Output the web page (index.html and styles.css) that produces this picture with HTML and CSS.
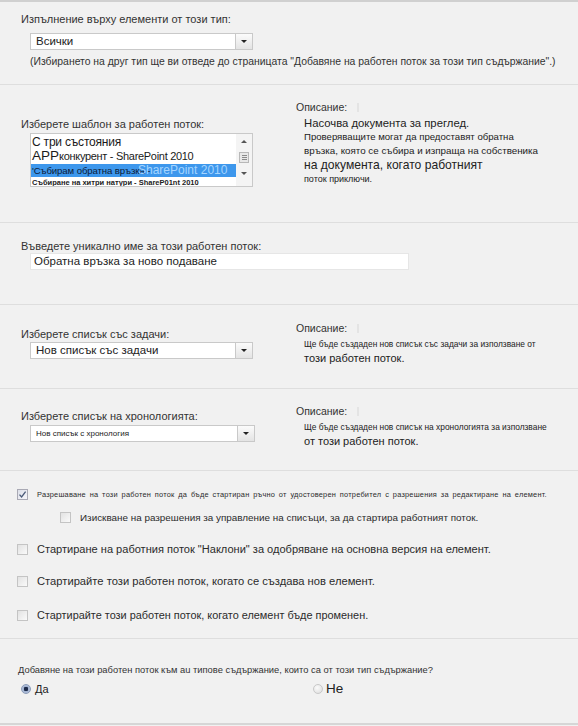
FILE: index.html
```html
<!DOCTYPE html>
<html lang="bg">
<head>
<meta charset="utf-8">
<title>Добавяне на работен поток</title>
<link rel="stylesheet" href="styles.css">
</head>
<body>
<div class="page">
  <section class="sec s1">
    <div class="lbl">Изпълнение върху елементи от този тип:</div>
    <div class="select sel-type"><span class="val v-big">Всички</span><span class="drop"><span class="tri"></span></span></div>
    <div class="hint">(Избирането на друг тип ще ви отведе до страницата "Добавяне на работен поток за този тип съдържание".)</div>
  </section>

  <section class="sec two s2">
    <div class="left l2">
      <div class="lbl">Изберете шаблон за работен поток:</div>
      <div class="listbox">
        <div class="opts">
          <div class="opt o1">С три състояния</div>
          <div class="opt o2"><span class="big">АРР</span>конкурент - SharePoint 2010</div>
          <div class="opt osel"><span class="dark">'Събирам обратна връзка -</span><span class="ghost">SharePoint 2010</span></div>
          <div class="opt o4">Събиране на хитри натури - ShareP01nt 2010</div>
        </div>
        <div class="sbar">
          <span class="sb-up"></span>
          <span class="sb-thumb"><i></i><i></i><i></i></span>
          <span class="sb-down"></span>
        </div>
      </div>
    </div>
    <div class="right r2">
      <div class="dlbl">Описание:<span class="mark"></span></div>
      <div class="desc">
        <div class="d d11">Насочва документа за преглед.</div>
        <div class="d d95">Проверяващите могат да предоставят обратна</div>
        <div class="d d98">връзка, която се събира и изпраща на собственика</div>
        <div class="d d12">на документа, когато работният</div>
        <div class="d d9">поток приключи.</div>
      </div>
    </div>
  </section>

  <section class="sec s3">
    <div class="lbl">Въведете уникално име за този работен поток:</div>
    <div class="input">Обратна връзка за ново подаване</div>
  </section>

  <section class="sec two s4">
    <div class="left l4">
      <div class="lbl">Изберете списък със задачи:</div>
      <div class="select sel-task"><span class="val v-big">Нов списък със задачи</span><span class="drop"><span class="tri"></span></span></div>
    </div>
    <div class="right r4">
      <div class="dlbl">Описание:<span class="mark"></span></div>
      <div class="desc">
        <div class="d d85">Ще бъде създаден нов списък със задачи за използване от</div>
        <div class="d d11b">този работен поток.</div>
      </div>
    </div>
  </section>

  <section class="sec two s5">
    <div class="left l5">
      <div class="lbl">Изберете списък на хронологията:</div>
      <div class="select sel-hist"><span class="val v-small">Нов списък с хронология</span><span class="drop"><span class="tri"></span></span></div>
    </div>
    <div class="right r5">
      <div class="dlbl">Описание:<span class="mark"></span></div>
      <div class="desc">
        <div class="d d85">Ще бъде създаден нов списък на хронологията за използване</div>
        <div class="d d11b">от този работен поток.</div>
      </div>
    </div>
  </section>

  <section class="sec s6">
    <div class="cbrow row1">
      <span class="cb checked"><svg viewBox="0 0 9 9" width="9" height="9"><path d="M1.5 4.6 L3.6 7 L7.6 1.6" fill="none" stroke="#4a5a78" stroke-width="1.3"/></svg></span>
      <span class="cbt t-tiny">Разрешаване на този работен поток да бъде стартиран ръчно от удостоверен потребител с разрешения за редактиране на елемент.</span>
    </div>
    <div class="cbrow row2">
      <span class="cb"></span>
      <span class="cbt t-10">Изискване на разрешения за управление на списъци, за да стартира работният поток.</span>
    </div>
    <div class="cbrow row3">
      <span class="cb"></span>
      <span class="cbt t-105">Стартиране на работния поток "Наклони" за одобряване на основна версия на елемент.</span>
    </div>
    <div class="cbrow row4">
      <span class="cb"></span>
      <span class="cbt t-11">Стартирайте този работен поток, когато се създава нов елемент.</span>
    </div>
    <div class="cbrow row5">
      <span class="cb"></span>
      <span class="cbt t-11b">Стартирайте този работен поток, когато елемент бъде променен.</span>
    </div>
  </section>

  <section class="sec s7">
    <div class="lbl lbl7">Добавяне на този работен поток към au типове съдържание, които са от този тип съдържание?</div>
    <div class="radios">
      <span class="radio-item yes"><span class="radio on"></span><span class="rt rt-yes">Да</span></span>
      <span class="radio-item no"><span class="radio"></span><span class="rt rt-no">Не</span></span>
    </div>
  </section>
</div>
</body>
</html>
```

FILE: styles.css
```css
html, body {
  margin: 0;
  padding: 0;
}
body {
  width: 578px;
  height: 726px;
  overflow: hidden;
  background: #f1f1f1;
  font-family: "Liberation Sans", Arial, sans-serif;
  color: #2f2f2f;
}
.page {
  width: 578px;
  border-top: 2px solid #d0d0d0;
  box-sizing: border-box;
}
.sec {
  box-sizing: border-box;
  border-bottom: 1px solid #dedede;
  padding-left: 21px;
}
.two {
  display: flex;
  align-items: flex-start;
}
.left {
  width: 275px;
  flex: none;
}
.right {
  flex: 1;
}
.lbl {
  font-size: 11px;
  line-height: 14px;
  color: #333;
  white-space: nowrap;
}

/* select */
.select {
  margin-left: 9px;
  height: 17px;
  box-sizing: border-box;
  background: #fff;
  border: 1px solid #c9c9c9;
  display: flex;
}
.select .val {
  flex: 1;
  padding-left: 5px;
  color: #222;
  white-space: nowrap;
  overflow: hidden;
}
.v-big {
  font-size: 11.5px;
  line-height: 15px;
}
.v-small {
  font-size: 8px;
  line-height: 15px;
  padding-left: 3px;
}
.drop {
  width: 16px;
  flex: none;
  border-left: 1px solid #c9c9c9;
  background: linear-gradient(#fbfbfb, #e4e4e4);
  display: flex;
  align-items: center;
  justify-content: center;
}
.tri {
  width: 0;
  height: 0;
  border-left: 3px solid transparent;
  border-right: 3px solid transparent;
  border-top: 3px solid #222;
}

/* section 1 */
.s1 {
  height: 83px;
  padding-top: 10px;
}
.sel-type {
  margin-top: 7px;
  width: 223px;
}
.hint {
  margin-left: 9px;
  margin-top: 5px;
  font-size: 10.4px;
  line-height: 14px;
  color: #333;
  white-space: nowrap;
}

/* section 2 */
.s2 {
  height: 138px;
}
.l2 {
  padding-top: 32px;
}
.r2 {
  padding-top: 15px;
}
.listbox {
  margin-left: 9px;
  margin-top: 2px;
  width: 223px;
  height: 54px;
  box-sizing: border-box;
  background: #fff;
  border: 1px solid #c9c9c9;
  display: flex;
}
.opts {
  flex: 1;
  min-width: 0;
  padding-top: 1px;
  overflow: hidden;
}
.opt {
  white-space: nowrap;
  color: #1a1a1a;
  padding-left: 1px;
}
.o1 {
  font-size: 12px;
  line-height: 14px;
  letter-spacing: -0.2px;
}
.o2 {
  font-size: 11px;
  line-height: 13px;
  letter-spacing: -0.3px;
}
.o2 .big {
  font-size: 13.5px;
  letter-spacing: 0;
}
.osel {
  position: relative;
  background: #3d97ec;
  height: 13px;
  line-height: 13px;
  font-size: 9.6px;
  margin-top: 1px;
  overflow: hidden;
}
.osel .dark {
  color: #0d1a36;
  letter-spacing: -0.1px;
}
.osel .ghost {
  position: absolute;
  left: 107px;
  top: 0;
  color: #a5d5ff;
  font-size: 12px;
  line-height: 13px;
}
.o4 {
  font-size: 7.5px;
  line-height: 11px;
  font-weight: bold;
  color: #222;
}
.sbar {
  width: 16px;
  flex: none;
  background: #f4f4f4;
  display: flex;
  flex-direction: column;
  align-items: center;
  padding-top: 6px;
  box-sizing: border-box;
}
.sb-up {
  width: 0;
  height: 0;
  border-left: 3px solid transparent;
  border-right: 3px solid transparent;
  border-bottom: 3px solid #555;
}
.sb-thumb {
  margin-top: 9px;
  width: 8px;
  height: 9px;
  border: 1px solid #b8b8b8;
  background: #e8e8e8;
  display: flex;
  flex-direction: column;
  justify-content: center;
  gap: 1px;
  align-items: center;
}
.sb-thumb i {
  display: block;
  width: 5px;
  height: 1px;
  background: #8a8a8a;
}
.sb-down {
  margin-top: 9px;
  width: 0;
  height: 0;
  border-left: 3px solid transparent;
  border-right: 3px solid transparent;
  border-top: 3px solid #555;
}

.dlbl {
  font-size: 10.5px;
  line-height: 14px;
  color: #333;
  display: flex;
  align-items: center;
}
.mark {
  display: inline-block;
  width: 2px;
  height: 9px;
  margin-left: 10px;
  background: #e4e4e4;
}
.desc {
  margin-top: 2px;
  padding-left: 8px;
}
.d {
  line-height: 14px;
  white-space: nowrap;
  color: #222;
}
.d11 { font-size: 11.3px; }
.d95 { font-size: 9.6px; }
.d98 { font-size: 9.8px; }
.d12 { font-size: 12.1px; }
.d9 { font-size: 9px; }
.d85 { font-size: 8.4px; }
.d11b { font-size: 11px; line-height: 15px; }

/* section 3 */
.s3 {
  height: 82px;
  padding-top: 16px;
}
.input {
  margin-left: 9px;
  width: 379px;
  height: 17px;
  box-sizing: border-box;
  background: #fff;
  border: 1px solid #e6e6e6;
  font-size: 11.5px;
  line-height: 15px;
  padding-left: 3px;
  color: #222;
}

/* section 4 */
.s4 {
  height: 84px;
}
.l4 {
  padding-top: 22px;
}
.r4 {
  padding-top: 16px;
}
.sel-task {
  margin-top: 1px;
  width: 223px;
}

/* section 5 */
.s5 {
  height: 82px;
}
.l5 {
  padding-top: 20px;
}
.r5 {
  padding-top: 15px;
}
.sel-hist {
  margin-top: 2px;
  width: 225px;
}

/* section 6 */
.s6 {
  height: 168px;
  padding-left: 17px;
  padding-top: 16px;
}
.cbrow {
  display: flex;
  align-items: center;
  height: 14px;
}
.row2 { margin-top: 9px; padding-left: 43px; }
.row3 { margin-top: 18px; }
.row4 { margin-top: 18px; }
.row5 { margin-top: 20px; }
.cb {
  width: 11px;
  height: 11px;
  box-sizing: border-box;
  border: 1px solid #c4c4c4;
  background: linear-gradient(135deg, #e2e2e2, #fafafa);
  flex: none;
  display: flex;
  align-items: center;
  justify-content: center;
}
.cb.checked {
  border-color: #a9a9b4;
  background: linear-gradient(135deg, #dcdfe8, #f6f6fa);
}
.cbt {
  margin-left: 9px;
  white-space: nowrap;
  color: #2b2b2b;
}
.t-tiny {
  font-size: 7.4px;
  letter-spacing: 0.22px;
  word-spacing: 1.5px;
}
.t-10 {
  font-size: 9.9px;
}
.t-105 {
  font-size: 11.05px;
}
.t-11 {
  font-size: 11.2px;
}
.t-11b {
  font-size: 10.9px;
}

/* section 7 */
.s7 {
  height: 86px;
  padding-left: 18px;
  padding-top: 24px;
  border-bottom: 2px solid #d6d6d6;
}
.lbl7 {
  font-size: 9.35px;
}
.radios {
  margin-top: 4px;
  display: flex;
  height: 15px;
  align-items: center;
}
.radio-item {
  display: flex;
  align-items: center;
}
.yes {
  margin-left: 3px;
  width: 292px;
}
.radio {
  width: 10px;
  height: 10px;
  box-sizing: border-box;
  border-radius: 50%;
  border: 1px solid #c8c8c8;
  background: radial-gradient(circle at 40% 35%, #fafafa, #dcdcdc);
  flex: none;
}
.radio.on {
  border-color: #8a9bb8;
  background: radial-gradient(circle, #1c2a48 0 2px, #9fb0cf 2.5px, #c7d2e6 100%);
}
.rt {
  margin-left: 4px;
  color: #222;
}
.rt-yes { font-size: 11px; }
.rt-no { font-size: 13.5px; margin-left: 3px; }
```
